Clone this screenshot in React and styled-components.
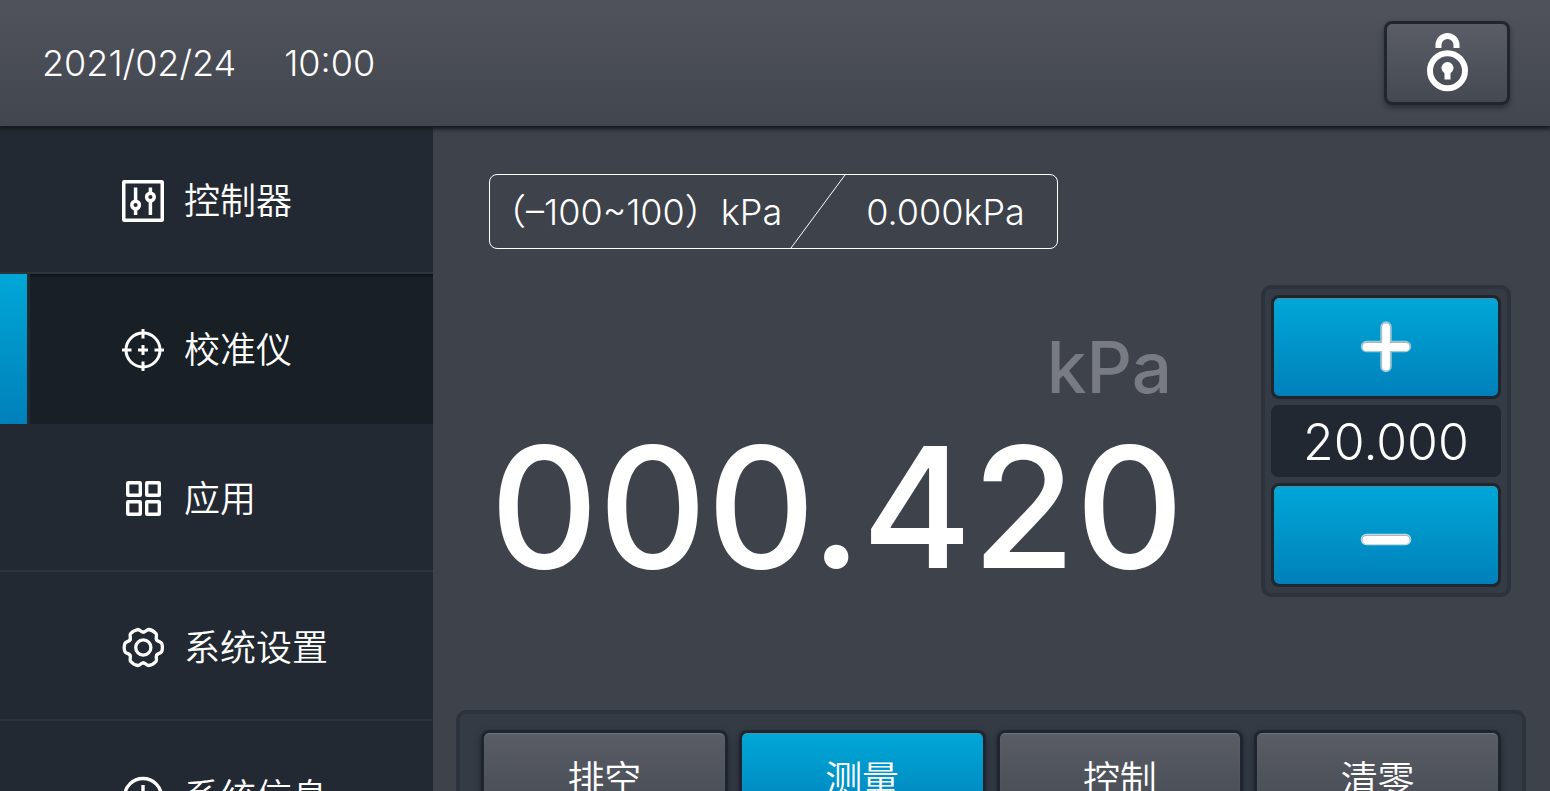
import React, { useState } from 'react';
import styled, { createGlobalStyle, css } from 'styled-components';

const GlobalStyle = createGlobalStyle`
  * {
    box-sizing: border-box;
  }

  body {
    margin: 0;
    background: #3d424b;
    color: #fff;
    font-family: Inter, 'Noto Sans CJK SC', sans-serif;
    font-weight: 350;
  }

  button,
  input {
    font: inherit;
    color: inherit;
  }
`;

const blueFill = 'linear-gradient(#00a8d7, #0080bb)';
const greyFill = 'linear-gradient(#5a5d66, #444952)';

const Screen = styled.div`
  display: flex;
  flex-direction: column;
  height: 100vh;
  overflow: hidden;
`;

const Header = styled.header`
  display: flex;
  flex: none;
  align-items: center;
  justify-content: space-between;
  height: 126px;
  margin-bottom: -1px;
  padding: 0 40px 0 42px;
  background: linear-gradient(#50535c, #42464f);
  box-shadow: 0 2px 4px 1px #15181c;
  z-index: 1;
`;

const Clock = styled.time`
  display: flex;
  gap: 48px;
  font-size: 36px;
  line-height: 44px;
`;

const LockButton = styled.button`
  display: flex;
  align-items: center;
  justify-content: center;
  width: 126px;
  height: 84px;
  padding: 0;
  border: 3px solid #20262f;
  border-radius: 8px;
  background: ${greyFill} padding-box;
  box-shadow: 0 3px 5px rgba(20, 24, 30, 0.5);
  cursor: pointer;
`;

const Body = styled.div`
  display: flex;
  flex: 1;
  min-height: 0;
`;

const Sidebar = styled.nav`
  flex: 0 0 433px;
  background: #232932;
`;

const MenuItem = styled.a`
  display: flex;
  align-items: center;
  gap: 20px;
  height: 149px;
  padding: 4px 0 0 122px;
  border-bottom: 2px solid #2d333c;
  color: #fff;
  font-size: 36px;
  line-height: 44px;
  text-decoration: none;

  svg {
    flex: none;
  }

  ${({ $active }) =>
    $active &&
    css`
      height: 150px;
      margin-bottom: -1px;
      padding-top: 2px;
      border-bottom: none;
      background:
        ${blueFill} 0 0 / 27px 100% no-repeat,
        linear-gradient(#222a31, #222a31) 27px 0 / 3px 100% no-repeat,
        linear-gradient(#0e1216, #181f25 4px);
    `}
`;

const Main = styled.main`
  display: flex;
  flex: 1;
  flex-direction: column;
  min-width: 0;
  padding: 49px 24px 0 23px;
`;

const RangeBox = styled.div`
  display: flex;
  align-self: flex-start;
  align-items: center;
  height: 75px;
  margin-left: 33px;
  padding-right: 32px;
  border: 1px solid #fff;
  border-radius: 8px;
  font-size: 36px;
  line-height: 44px;

  svg {
    margin: 0 20px 0 8px;
  }
`;

const Gauge = styled.div`
  display: flex;
  align-items: flex-start;
  justify-content: space-between;
  margin-top: 36px;
  padding: 0 15px 0 34px;
`;

const Reading = styled.div`
  display: flex;
  flex-direction: column;
  align-items: flex-end;
  padding-top: 40px;
  font-weight: 500;
`;

const Unit = styled.span`
  padding-right: 12px;
  color: #787b82;
  font-size: 71px;
  line-height: 84px;
`;

const Value = styled.output`
  font-size: 168px;
  line-height: 196px;
`;

const Stepper = styled.div`
  display: flex;
  flex-direction: column;
  gap: 6px;
  width: 250px;
  padding: 6px;
  border: 4px solid #2c333c;
  border-radius: 10px;
  background: #343b44;
`;

const StepButton = styled.button`
  display: flex;
  align-items: center;
  justify-content: center;
  height: 104px;
  padding: 0;
  border: 3px solid #1f262e;
  border-radius: 8px;
  background: ${blueFill} padding-box;
  box-shadow: inset 0 1px 1px #4f8ea3;
  cursor: pointer;
`;

const StepInput = styled.input`
  width: 100%;
  height: 72px;
  padding: 2px 0 0;
  border: none;
  border-radius: 7px;
  background: #222831;
  font-size: 50px;
  text-align: center;
`;

const Actions = styled.div`
  display: flex;
  gap: 11px;
  margin-top: 105px;
  padding: 16px 21px;
  border: 4px solid #2c333c;
  border-radius: 10px;
  background: #343b44;
`;

const ActionButton = styled.button`
  flex: 1;
  height: 94px;
  padding: 0;
  border: 3px solid #1f252e;
  border-radius: 8px;
  background: ${({ $active }) => ($active ? blueFill : greyFill)} padding-box;
  box-shadow: inset 0 1px 1px rgba(130, 134, 142, 0.6), 0 3px 6px rgba(25, 29, 40, 0.7);
  font-size: 37px;
  cursor: pointer;
`;

const LockIcon = () => (
  <svg width="42" height="60" viewBox="0 0 42 60" fill="none" stroke="#fff">
    <path d="M12.5 15v-3a9 9 0 0 1 18 0v3" strokeWidth="6" />
    <circle cx="21.5" cy="37.7" r="17.5" strokeWidth="6" />
    <path d="M18.5 46.5v-6.3a6 6 0 1 1 6 0v6.3z" fill="#fff" stroke="none" />
  </svg>
);

const ControllerIcon = () => (
  <svg width="42" height="42" viewBox="0 0 42 42" fill="none" stroke="#fff" strokeWidth="3.5">
    <rect x="1.75" y="1.75" width="38.5" height="38.5" rx="0.5" />
    <circle cx="13.6" cy="25" r="3.8" />
    <circle cx="28.4" cy="17" r="3.8" />
    <path d="M13.6 7.5v14M13.6 28.5V35M28.4 7.5V14M28.4 20.5V35" />
  </svg>
);

const CalibratorIcon = () => (
  <svg width="42" height="42" viewBox="0 0 42 42" fill="none" stroke="#fff" strokeWidth="3">
    <circle cx="21" cy="21" r="17" />
    <path d="M21 0v9.5M21 32.5V42M0 21h9.5M32.5 21H42M16 21h10M21 16v10" />
  </svg>
);

const AppsIcon = () => (
  <svg width="42" height="42" viewBox="0 0 42 42" fill="none" stroke="#fff" strokeWidth="3.4">
    <rect x="5.7" y="4.7" width="12.6" height="12.6" rx="0.5" />
    <rect x="24.7" y="4.7" width="12.6" height="12.6" rx="0.5" />
    <rect x="5.7" y="23.7" width="12.6" height="12.6" rx="0.5" />
    <rect x="24.7" y="23.7" width="12.6" height="12.6" rx="0.5" />
  </svg>
);

// one tooth, repeated around the hub
const SettingsIcon = () => (
  <svg width="42" height="42" viewBox="0 0 42 42" fill="none" stroke="#fff" strokeWidth="3.3" strokeLinecap="round">
    <g transform="translate(21.3 20.5)">
      {[0, 60, 120, 180, 240, 300].map(angle => (
        <path
          key={angle}
          d="M0-15.4C2.6-15.4 3-18 5.5-18C8-17.6 11.2-15.7 12.8-13.8C14.1-11.6 12-10 13.3-7.7"
          transform={`rotate(${angle})`}
        />
      ))}
      <circle r="7.6" />
    </g>
  </svg>
);

const InfoIcon = () => (
  <svg width="42" height="42" viewBox="0 0 42 42" fill="none" stroke="#fff" strokeWidth="3.4">
    <circle cx="21" cy="21" r="18.5" />
    <path d="M21 9v15M21 28v4" />
  </svg>
);

const PlusIcon = () => (
  <svg width="52" height="52" viewBox="0 0 52 52" fill="none" strokeLinecap="round">
    <path d="M26 6v39.5M6.5 25.5h39" stroke="#8fd3ec" strokeWidth="11.4" />
    <path d="M26 6v39.5M6.5 25.5h39" stroke="#b4b4b4" strokeWidth="9.6" />
    <path d="M26 6.5v39M6.5 26h39" stroke="#fff" strokeWidth="7.8" />
  </svg>
);

const MinusIcon = () => (
  <svg width="52" height="52" viewBox="0 0 52 52" fill="none" strokeLinecap="round">
    <path d="M6.5 30.5h39" stroke="#c5e6f3" strokeWidth="11.4" />
    <path d="M6.5 30.5h39" stroke="#b4b4b4" strokeWidth="9.6" />
    <path d="M6.5 31h39" stroke="#fff" strokeWidth="7.8" />
  </svg>
);

const menu = [
  { id: 'controller', label: '控制器', Icon: ControllerIcon },
  { id: 'calibrator', label: '校准仪', Icon: CalibratorIcon },
  { id: 'apps', label: '应用', Icon: AppsIcon },
  { id: 'settings', label: '系统设置', Icon: SettingsIcon },
  { id: 'info', label: '系统信息', Icon: InfoIcon },
];

const actions = ['排空', '测量', '控制', '清零'];

const App = () => {
  const [page, setPage] = useState('calibrator');
  const [action, setAction] = useState('测量');
  const [target, setTarget] = useState(20);

  return (
    <>
      <GlobalStyle />
      <Screen>
        <Header>
          <Clock dateTime="2021-02-24T10:00">
            <span>2021/02/24</span>
            <span>10:00</span>
          </Clock>
          <LockButton aria-label="锁定">
            <LockIcon />
          </LockButton>
        </Header>

        <Body>
          <Sidebar>
            {menu.map(({ id, label, Icon }) => (
              <MenuItem key={id} href={`#${id}`} $active={id === page} onClick={() => setPage(id)}>
                <Icon />
                {label}
              </MenuItem>
            ))}
          </Sidebar>

          <Main>
            <RangeBox>
              <span>（–100~100）kPa</span>
              <svg width="56" height="73" viewBox="0 0 56 73" stroke="#fff">
                <path d="M1 73L55 0" />
              </svg>
              <span>0.000kPa</span>
            </RangeBox>

            <Gauge>
              <Reading>
                <Unit>kPa</Unit>
                <Value>000.420</Value>
              </Reading>
              <Stepper>
                <StepButton aria-label="增加" onClick={() => setTarget(target + 1)}>
                  <PlusIcon />
                </StepButton>
                <StepInput aria-label="目标值" value={target.toFixed(3)} readOnly />
                <StepButton aria-label="减少" onClick={() => setTarget(target - 1)}>
                  <MinusIcon />
                </StepButton>
              </Stepper>
            </Gauge>

            <Actions>
              {actions.map(name => (
                <ActionButton key={name} $active={name === action} onClick={() => setAction(name)}>
                  {name}
                </ActionButton>
              ))}
            </Actions>
          </Main>
        </Body>
      </Screen>
    </>
  );
};

export default App;
